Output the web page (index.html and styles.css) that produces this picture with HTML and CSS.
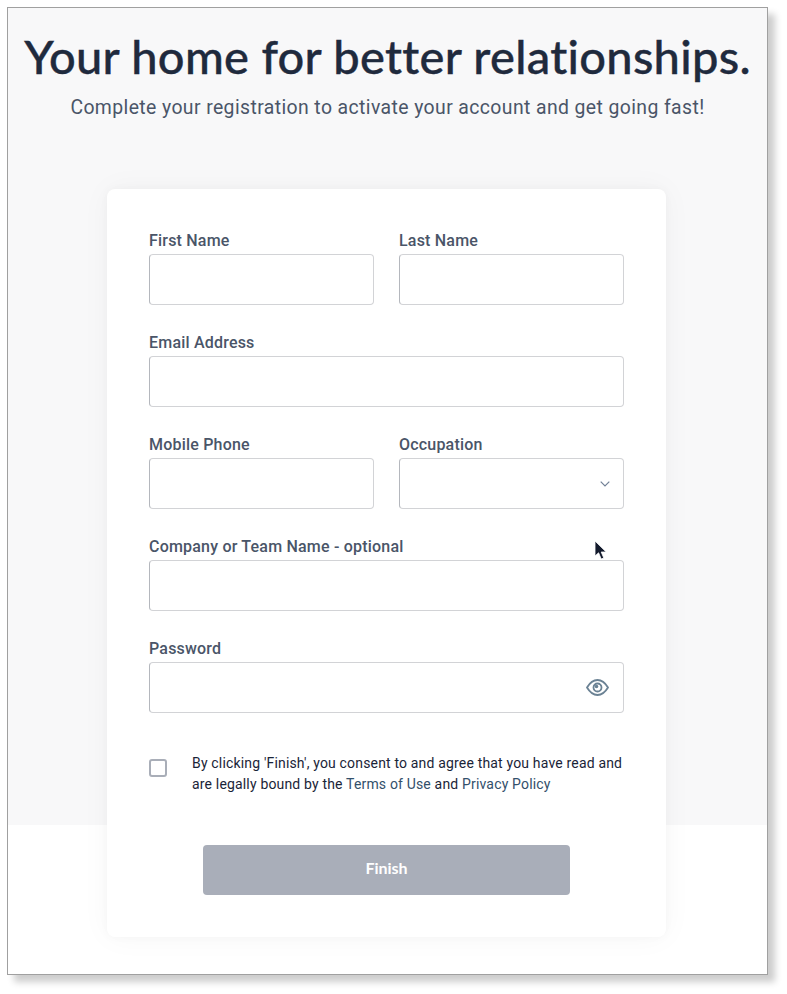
FILE: index.html
```html
<!DOCTYPE html>
<html lang="en">
<head>
    <meta charset="UTF-8">
    <meta name="viewport" content="width=device-width, initial-scale=1.0">
    <title>Complete your registration</title>
    <link rel="stylesheet" href="styles.css">
</head>
<body>
    <div class="frame">
        <div class="header">
            <h1>Your home for better relationships.</h1>
            <p>Complete your registration to activate your account and get going fast!</p>
        </div>

        <form class="card">
            <div class="row">
                <div class="field">
                    <label>First Name</label>
                    <div class="input"></div>
                </div>
                <div class="field">
                    <label>Last Name</label>
                    <div class="input"></div>
                </div>
            </div>

            <div class="field">
                <label>Email Address</label>
                <div class="input"></div>
            </div>

            <div class="row">
                <div class="field">
                    <label>Mobile Phone</label>
                    <div class="input"></div>
                </div>
                <div class="field">
                    <label>Occupation</label>
                    <div class="input select">
                        <svg width="10" height="6" viewBox="0 0 10 6" fill="none" stroke="#718096" stroke-width="1.2"><path d="M0.7 0.7 L5 5 L9.3 0.7"/></svg>
                    </div>
                </div>
            </div>

            <div class="field">
                <label>Company or Team Name - optional</label>
                <div class="input"></div>
            </div>

            <div class="field">
                <label>Password</label>
                <div class="input password">
                    <svg width="23" height="17" viewBox="0 0 23 17" fill="none" stroke="#6b8294" stroke-width="1.8"><path d="M1 8.5 C4 3.5 7.5 1 11.5 1 C15.5 1 19 3.5 22 8.5 C19 13.5 15.5 16 11.5 16 C7.5 16 4 13.5 1 8.5 Z"/><circle cx="11.5" cy="8.5" r="4"/><circle cx="10.5" cy="7.5" r="1.8" fill="#6b8294" stroke="none"/></svg>
                </div>
            </div>

            <div class="consent">
                <span class="checkbox"></span>
                <p>By clicking 'Finish', you consent to and agree that you have read and are legally bound by the <a href="#">Terms of Use</a> and <a href="#">Privacy Policy</a></p>
            </div>

            <button type="button" class="finish">Finish</button>
        </form>

        <!-- mouse pointer caught in the screenshot -->
        <svg class="cursor" width="14" height="22" viewBox="0 0 14 22"><path d="M1 1 L1 16 L4.6 12.8 L7.2 19 L9.8 18 L7.2 12 L12.2 12 Z" fill="#141b2d" stroke="#ffffff" stroke-width="0.8"/></svg>
    </div>
</body>
</html>
```

FILE: styles.css
```css
html, body {
    height: 100%;
}

body {
    margin: 0;
    background: white;
    font-family: Roboto, Arial, sans-serif;
    overflow: hidden;
}

.frame {
    position: relative;
    box-sizing: border-box;
    width: 761px;
    height: 968px;
    margin: 7px 0 0 7px;
    border: 1px solid #a0a0a0;
    background: linear-gradient(#f8f8f9 0, #f8f8f9 817px, white 817px);
    box-shadow: 7px 7px 7px rgba(0,0,0,0.2);
}

.header {
    text-align: center;
    height: 181px;
}

h1 {
    margin: 0;
    padding-top: 21px;
    font-family: Lato, Arial, sans-serif;
    font-size: 47px;
    line-height: 54px;
    font-weight: 500;
    letter-spacing: 0.3px;
    font-variant-ligatures: none;
    -webkit-text-stroke: 0.4px #1f2a3d;
    color: #1f2a3d;
    white-space: nowrap;
}

.header p {
    margin: 12px 0 0;
    font-size: 19.4px;
    line-height: 26px;
    letter-spacing: 0.4px;
    color: #4a5568;
}

.card {
    box-sizing: border-box;
    width: 559px;
    height: 748px;
    margin-left: 99px;
    padding: 42px 42px 0;
    background: white;
    border-radius: 8px;
    box-shadow: 0 0 30px rgba(0,0,0,0.04), 0 0 8px rgba(0,0,0,0.03);
}

.row {
    display: flex;
    gap: 25px;
}

.row .field {
    width: 225px;
}

.field {
    height: 102px;
}

label {
    display: block;
    height: 23px;
    font-size: 16px;
    line-height: 20px;
    letter-spacing: 0.2px;
    font-weight: 500;
    color: #4a5568;
}

.input {
    box-sizing: border-box;
    height: 51px;
    border: 1.5px solid #d2d3d6;
    border-left: 1px solid #b4b7bd;
    border-radius: 4px;
    background: white;
    display: flex;
    align-items: center;
    justify-content: flex-end;
}

.select {
    padding-right: 13px;
}

.password {
    padding-right: 14px;
}

.consent {
    display: flex;
    gap: 25px;
    margin-top: 12px;
}

.checkbox {
    box-sizing: border-box;
    flex: none;
    width: 18px;
    height: 18px;
    margin-top: 6px;
    border: 2px solid #a9aeb8;
    border-radius: 3px;
}

.consent p {
    margin: 0;
    font-size: 14px;
    line-height: 21px;
    letter-spacing: 0.17px;
    color: #1a2438;
}

.consent a {
    color: #33506b;
    text-decoration: none;
}

.finish {
    display: block;
    width: 367px;
    height: 50px;
    margin: 50px 0 0 54px;
    padding-bottom: 6px;
    border: none;
    border-radius: 4px;
    background: #a9aeb9;
    color: white;
    font-family: Lato, Arial, sans-serif;
    font-size: 16px;
    font-weight: 700;
}

.cursor {
    position: absolute;
    left: 586px;
    top: 532px;
}
```
